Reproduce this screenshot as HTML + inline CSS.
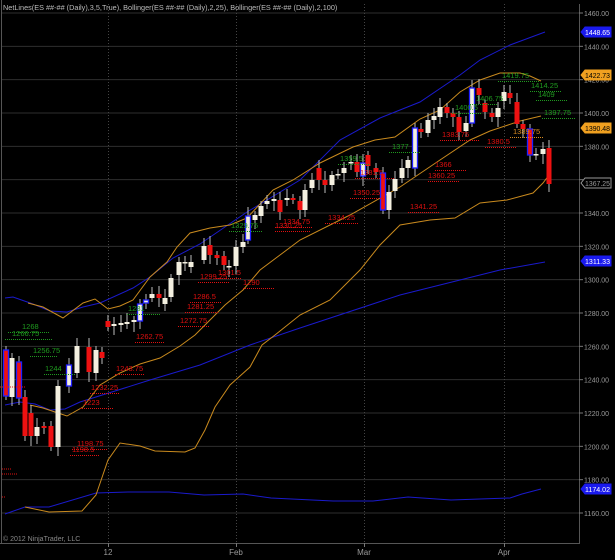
<!DOCTYPE html>
<html><head><meta charset="utf-8"><style>
html,body{margin:0;padding:0;background:#000;width:615px;height:560px;overflow:hidden}
svg{display:block}
text{font-family:"Liberation Sans",sans-serif}
</style></head><body>
<svg id="s" width="615" height="560" xmlns="http://www.w3.org/2000/svg"></svg>
<script>
var s=document.getElementById('s'),h='';
function Y(p){return 13+(1460-p)*1.6667;}
h+='<rect x="0" y="0" width="615" height="560" fill="#000"/>';
h+='<line x1="1.5" y1="0" x2="1.5" y2="544" stroke="#555"/>';
h+='<line x1="0" y1="543.5" x2="580" y2="543.5" stroke="#555"/>';
h+='<line x1="579.5" y1="4" x2="579.5" y2="544" stroke="#555"/>';
for(var p=1460;p>=1160;p-=20){var y=Y(p);
h+='<line x1="2" y1="'+y+'" x2="579" y2="'+y+'" stroke="#2e2e2e"/>';
h+='<line x1="579" y1="'+y+'" x2="583" y2="'+y+'" stroke="#777"/>';
h+='<text x="584" y="'+(y+3)+'" font-size="7.5" fill="#9a9a9a" textLength="25" lengthAdjust="spacingAndGlyphs">'+p+'.00</text>';}
[108,236,364,504].forEach(function(x){h+='<line x1="'+x+'.5" y1="4" x2="'+x+'.5" y2="543" stroke="#444" stroke-dasharray="1,2"/>';
h+='<line x1="'+x+'.5" y1="543" x2="'+x+'.5" y2="547" stroke="#777"/>';});
[['12',108],['Feb',236],['Mar',364],['Apr',504]].forEach(function(a){h+='<text x="'+a[1]+'" y="555" font-size="8" fill="#9a9a9a" text-anchor="middle">'+a[0]+'</text>';});
h+='<text x="3" y="10" font-size="7.3" fill="#bbb">NetLines(ES ##-## (Daily),3,5,True), Bollinger(ES ##-## (Daily),2,25), Bollinger(ES ##-## (Daily),2,100)</text>';
h+='<text x="3" y="541" font-size="7" fill="#888">© 2012 NinjaTrader, LLC</text>';
function pl(pts,c){h+='<polyline fill="none" stroke="'+c+'" stroke-width="1" points="'+pts+'"/>';}
var OR='#c98a1e',BL='#1a1acc';
pl('5,298 13,297 33,304 50,311 67,312 83,307 100,303 133,288 150,277 173,258 200,244 247,212 300,180 340,140 380,118 420,102 460,75 480,60 510,45 545,32',BL);
pl('5,405 20,402 35,404 50,410 65,409 80,402 150,380 200,365 250,345 300,328 400,295 500,270 545,262',BL);
pl('5,514 25,507 49,507 96,493 129,492 169,492 204,495 243,494 271,498 333,501 373,501 408,497 451,500 510,498 522,494 541,489',BL);
pl('28,303 43,307 63,318 83,303 95,299 108,309 120,306 133,300 150,277 167,262 177,247 190,233 210,228 230,225 247,218 273,190 293,180 320,163 353,147 375,140 395,137 420,119 440,110 460,92 480,80 500,73 520,73 530,76 541,81',OR);
pl('30,405 43,408 55,412 67,416 83,407 100,385 120,373 140,364 160,358 180,346 195,335 210,320 225,305 243,290 260,270 280,255 300,240 350,215 400,187 440,160 470,140 490,131 520,121 541,116',OR);
pl('25,507 49,512 82,511 96,495 108,460 120,443 140,446 155,451 185,452 195,448 205,430 215,407 230,385 250,367 262,345 275,335 300,315 330,300 360,270 380,245 400,225 430,220 455,218 480,203 507,200 533,193 543,183 549,175',OR);
var C=[[6,350,396,'R'],[12,358,397,'w'],[19,362,398,'R'],[25,397,436,'r'],[31,413,436,'r'],[37,427,436,'w'],[44,426,428,'r'],[51,426,447,'r'],[58,386,447,'w'],[69,365,386,'b'],[77,346,373,'w'],[89,347,372,'r'],[96,350,373,'w'],[102,352,358,'r'],[108,321,327,'r'],[114,324,326,'w'],[121,323,325,'w'],[127,322,324,'w'],[134,320,322,'w'],[140,304,321,'b'],[146,300,303,'b'],[152,294,298,'w'],[159,294,298,'r'],[165,298,304,'w'],[171,278,297,'w'],[179,262,275,'w'],[185,262,263,'w'],[191,262,267,'w'],[204,246,260,'w'],[210,245,255,'r'],[217,255,258,'r'],[224,256,265,'r'],[229,266,267,'w'],[236,247,266,'w'],[243,242,247,'w'],[248,216,240,'b'],[255,215,220,'w'],[261,206,216,'w'],[267,201,204,'w'],[274,199,201,'w'],[280,200,212,'r'],[287,198,200,'w'],[293,198,200,'r'],[300,201,210,'r'],[305,190,210,'w'],[312,180,188,'w'],[319,168,180,'r'],[325,180,185,'r'],[332,175,185,'w'],[338,174,175,'w'],[344,168,173,'w'],[351,162,163,'w'],[357,162,172,'r'],[363,163,176,'b'],[368,155,166,'r'],[376,168,172,'r'],
[383,173,210,'R'],[389,192,210,'w'],[395,179,191,'w'],[402,168,178,'w'],[408,160,168,'w'],[415,128,168,'b'],[421,129,132,'r'],[428,120,133,'w'],[434,116,120,'w'],[440,107,117,'w'],[447,107,113,'r'],[453,113,117,'r'],[459,117,132,'r'],[466,123,131,'w'],[472,88,123,'b'],[479,88,95,'r'],[485,103,112,'r'],[492,113,117,'r'],[498,108,117,'w'],[504,92,101,'w'],[510,93,98,'r'],[517,102,124,'r'],[523,124,129,'r'],[530,129,155,'R'],[536,154,155,'w'],[543,149,154,'w'],[549,148,184,'r']];
C.forEach(function(c,i){var x=c[0],t=c[1],b=c[2],k=c[3];var hi=t-4-(i*7%6),lo=b+4+(i*5%7);
h+='<line x1="'+x+'" y1="'+hi+'" x2="'+x+'" y2="'+lo+'" stroke="#bbb" stroke-width="1"/>';
var fill=(k=='r'||k=='R')?'#ee1111':'#f4f0e0';var st=(k=='b'||k=='R')?'stroke="#2020ff" stroke-width="1.3"':'';
h+='<rect x="'+(x-2.5)+'" y="'+t+'" width="5" height="'+Math.max(b-t,1.5)+'" fill="'+fill+'" '+st+'/>';});
function lv(t,x,y,x1,x2,c){h+='<text x="'+x+'" y="'+y+'" font-size="7.5" fill="'+c+'">'+t+'</text>';
h+='<line x1="'+x1+'" y1="'+(y+3.5)+'" x2="'+x2+'" y2="'+(y+3.5)+'" stroke="'+c+'" stroke-dasharray="1,1"/>';}
var G='#1f9a1f',R='#e01010';
[['1419.75',502,78,498,540],['1414.25',531,88,530,561],['1409',538,97,536,568],['1397.75',544,115,542,576],['1406.75',476,101,470,498],['1400.5',455,110,452,482],['1377',392,149,389,420],['1359.5',340,161,338,370],['1329.75',231,228,229,262],['1281',128,311,127,160],['1268',22,329,8,50],['1266.75',12,336,5,52],['1256.75',33,353,30,58],['1244',45,371,44,76]].forEach(function(a){lv(a[0],a[1],a[2],a[3],a[4],G);});
[['1341.25',410,209,408,440],['1360.25',428,178,428,460],['1366',435,167,435,466],['1380.5',487,144,485,517],['1383.75',442,137,440,480],['1381.5',360,175,355,395],['1350.25',353,195,350,385],['1334.25',328,220,325,358],['1334.75',283,224,275,312],['1330.25',275,228,275,310],['1299.25',200,279,198,230],['1301.5',218,275,216,242],['1290',243,285,243,275],['1286.5',193,299,190,222],['1281.25',187,309,185,218],['1272.75',180,323,178,210],['1262.75',136,339,135,165],['1243.75',116,371,115,145],['1232.25',91,390,90,120],['1223',83,405,80,113],['1198.75',77,446,72,108],['1198.5',72,452,70,100]].forEach(function(a){lv(a[0],a[1],a[2],a[3],a[4],R);});
lv('1389.75',513,134,510,543,'#d88a20');
h+='<line x1="0" y1="387" x2="25" y2="387" stroke="'+R+'" stroke-dasharray="1,1"/>';
h+='<line x1="2" y1="469" x2="12" y2="469" stroke="'+R+'" stroke-dasharray="1,1"/>';
h+='<line x1="2" y1="474" x2="18" y2="474" stroke="'+R+'" stroke-dasharray="1,1"/>';
h+='<line x1="2" y1="497" x2="6" y2="497" stroke="'+R+'" stroke-dasharray="1,1"/>';
function bd(t,y,bg,fg,bc){h+='<path d="M581,'+y+' L585,'+(y-5)+' L611,'+(y-5)+' L611,'+(y+5)+' L585,'+(y+5)+' Z" fill="'+bg+'" stroke="'+bc+'"/>';
h+='<text x="585" y="'+(y+3)+'" font-size="7.5" fill="'+fg+'" textLength="25" lengthAdjust="spacingAndGlyphs">'+t+'</text>';}
bd('1448.65',32,'#1a1aee','#fff','#1a1aee');
bd('1422.73',75,'#f0a020','#000','#f0a020');
bd('1390.48',128,'#f0a020','#000','#f0a020');
bd('1367.25',183,'#000','#999','#999');
bd('1311.33',261,'#1a1aee','#fff','#1a1aee');
bd('1174.02',489,'#1a1aee','#fff','#1a1aee');
s.innerHTML=h;
</script>
</body></html>
